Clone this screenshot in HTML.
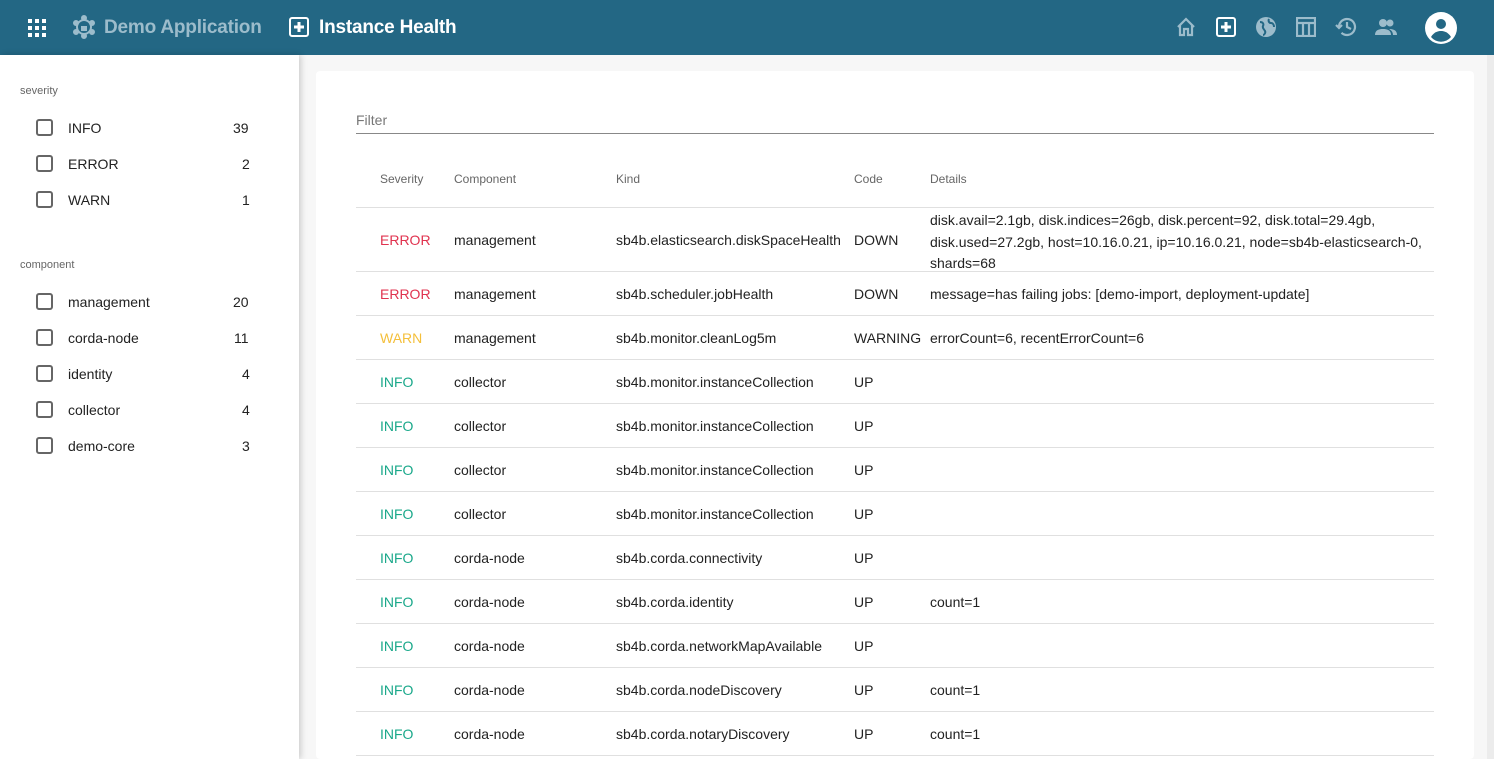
<!DOCTYPE html>
<html><head><meta charset="utf-8"><style>
*{box-sizing:border-box;margin:0;padding:0}
html,body{overflow:hidden}
body{width:1494px;height:759px;overflow:hidden;background:#f7f7f7;font-family:"Liberation Sans",sans-serif;position:relative;color:#222}
.hdr{position:absolute;left:0;top:0;width:1494px;height:55px;background:#236784}
.a{position:absolute;white-space:nowrap}
.side{position:absolute;left:0;top:55px;width:299px;height:704px;background:#fff;box-shadow:2px 0 6px rgba(0,0,0,.18)}
.card{position:absolute;left:316px;top:71px;width:1158px;height:688px;background:#fff;border-radius:4px}
.cb{position:absolute;left:36px;width:17px;height:17px;border:2px solid #666;border-radius:3px}
.st{font-size:14px}
.sh{font-size:12px;color:#666}
.line{position:absolute;left:356px;width:1078px;height:1px;background:#e0e0e0}
.e{color:#e0334f}.w{color:#f4bf3a}.i{color:#1aa88a}
</style></head><body>
<div class="hdr"></div>
<svg class="a" style="left:28px;top:19px" width="18" height="18" viewBox="0 0 18 18" fill="#fff"><rect x="0" y="0" width="4" height="4"/><rect x="7" y="0" width="4" height="4"/><rect x="14" y="0" width="4" height="4"/><rect x="0" y="7" width="4" height="4"/><rect x="7" y="7" width="4" height="4"/><rect x="14" y="7" width="4" height="4"/><rect x="0" y="14" width="4" height="4"/><rect x="7" y="14" width="4" height="4"/><rect x="14" y="14" width="4" height="4"/></svg>
<svg class="a" style="left:73px;top:15px" width="22" height="24" viewBox="0 0 22 24" fill="none" stroke="#9cbccb" stroke-width="2"><circle cx="11" cy="12" r="7"/><circle cx="11" cy="3" r="2" fill="#9cbccb"/><circle cx="3" cy="8" r="2" fill="#9cbccb"/><circle cx="19" cy="8" r="2" fill="#9cbccb"/><circle cx="3" cy="17" r="2" fill="#9cbccb"/><circle cx="19" cy="17" r="2" fill="#9cbccb"/><circle cx="11" cy="21" r="2" fill="#9cbccb"/><rect x="8" y="11" width="6" height="5" fill="#9cbccb" stroke="none"/></svg>
<div class="a" style="left:104px;top:17px;font-size:19px;font-weight:bold;color:#9cbccb;letter-spacing:-0.2px">Demo Application</div>
<svg class="a" style="left:289px;top:17px" width="20" height="20" viewBox="0 0 20 20"><rect x="1" y="1" width="18" height="18" rx="2" fill="none" stroke="#fff" stroke-width="2"/><path d="M10 5v10M5 10h10" stroke="#fff" stroke-width="3"/></svg>
<div class="a" style="left:319px;top:17px;font-size:19px;font-weight:bold;color:#fff;letter-spacing:-0.2px">Instance Health</div>
<svg class="a" style="left:1176px;top:17px" width="20" height="20" viewBox="0 0 20 20" fill="none" stroke="#9cbccb" stroke-width="2.2"><path d="M2 10L10 2l8 8M4 8v10h4v-6h4v6h4V8"/></svg>
<svg class="a" style="left:1216px;top:17px" width="20" height="20" viewBox="0 0 20 20"><rect x="1" y="1" width="18" height="18" rx="2" fill="none" stroke="#fff" stroke-width="2"/><path d="M10 5v10M5 10h10" stroke="#fff" stroke-width="3"/></svg>
<svg class="a" style="left:1256px;top:17px" width="20" height="20" viewBox="0 0 20 20"><circle cx="10" cy="10" r="10" fill="#9cbccb"/><path d="M4 5c3 0 4 2 3 4s1 3 2 5-1 4-2 4M13 2c-1 2 0 4 2 4s3 2 3 4" stroke="#236784" stroke-width="2" fill="none"/></svg>
<svg class="a" style="left:1296px;top:17px" width="20" height="20" viewBox="0 0 20 20" fill="none" stroke="#9cbccb" stroke-width="2.2"><rect x="1" y="1" width="18" height="18"/><path d="M1 6h18M7 6v13M13 6v13"/></svg>
<svg class="a" style="left:1335px;top:16px" width="22" height="22" viewBox="0 0 22 22" fill="none" stroke="#9cbccb" stroke-width="2.2"><path d="M4 11a8 8 0 1 1 2.5 5.8"/><path d="M1 9l3 3 3-3"/><path d="M12 6v5l4 2"/></svg>
<svg class="a" style="left:1375px;top:18px" width="22" height="18" viewBox="0 0 22 18" fill="#9cbccb"><circle cx="8" cy="5" r="4"/><circle cx="15" cy="5" r="3.5"/><path d="M0 17c0-5 4-6 8-6s8 1 8 6zM14 11c4 0 8 1 8 6h-4c0-3-2-5-4-6z"/></svg>
<svg class="a" style="left:1425px;top:12px" width="32" height="32" viewBox="0 0 32 32"><circle cx="16" cy="16" r="16" fill="#fff"/><circle cx="16" cy="12" r="5" fill="#236784"/><path d="M6 25c3-5 7-6 10-6s7 1 10 6a13 13 0 0 1-20 0z" fill="#236784"/></svg>

<div class="side"></div>
<div class="a sh" style="left:20px;top:85px;font-size:11px">severity</div>
<div class="cb" style="top:119px"></div><div class="a st" style="left:68px;top:120px">INFO</div><div class="a st" style="left:233px;top:120px">39</div>
<div class="cb" style="top:155px"></div><div class="a st" style="left:68px;top:156px">ERROR</div><div class="a st" style="left:242px;top:156px">2</div>
<div class="cb" style="top:191px"></div><div class="a st" style="left:68px;top:192px">WARN</div><div class="a st" style="left:242px;top:192px">1</div>
<div class="a sh" style="left:20px;top:259px;font-size:11px">component</div>
<div class="cb" style="top:293px"></div><div class="a st" style="left:68px;top:294px">management</div><div class="a st" style="left:233px;top:294px">20</div>
<div class="cb" style="top:329px"></div><div class="a st" style="left:68px;top:330px">corda-node</div><div class="a st" style="left:234px;top:330px">11</div>
<div class="cb" style="top:365px"></div><div class="a st" style="left:68px;top:366px">identity</div><div class="a st" style="left:242px;top:366px">4</div>
<div class="cb" style="top:401px"></div><div class="a st" style="left:68px;top:402px">collector</div><div class="a st" style="left:242px;top:402px">4</div>
<div class="cb" style="top:437px"></div><div class="a st" style="left:68px;top:438px">demo-core</div><div class="a st" style="left:242px;top:438px">3</div>

<div class="card"></div>
<div class="a" style="left:356px;top:112px;font-size:14px;color:#777">Filter</div>
<div class="a" style="left:356px;top:133px;width:1078px;height:1px;background:#888"></div>
<div class="a sh" style="left:380px;top:172px">Severity</div>
<div class="a sh" style="left:454px;top:172px">Component</div>
<div class="a sh" style="left:616px;top:172px">Kind</div>
<div class="a sh" style="left:854px;top:172px">Code</div>
<div class="a sh" style="left:930px;top:172px">Details</div>
<div class="line" style="top:207px"></div>

<div class="a st e" style="left:380px;top:232px">ERROR</div>
<div class="a st" style="left:454px;top:232px">management</div>
<div class="a st" style="left:616px;top:232px">sb4b.elasticsearch.diskSpaceHealth</div>
<div class="a st" style="left:854px;top:232px">DOWN</div>
<div class="a st" style="left:930px;top:210px;line-height:21.5px">disk.avail=2.1gb, disk.indices=26gb, disk.percent=92, disk.total=29.4gb,<br>disk.used=27.2gb, host=10.16.0.21, ip=10.16.0.21, node=sb4b-elasticsearch-0,<br>shards=68</div>
<div class="line" style="top:271px"></div>

<div class="a st e" style="left:380px;top:286px">ERROR</div><div class="a st" style="left:454px;top:286px">management</div><div class="a st" style="left:616px;top:286px">sb4b.scheduler.jobHealth</div><div class="a st" style="left:854px;top:286px">DOWN</div><div class="a st" style="left:930px;top:286px">message=has failing jobs: [demo-import, deployment-update]</div>
<div class="line" style="top:315px"></div>
<div class="a st w" style="left:380px;top:330px">WARN</div><div class="a st" style="left:454px;top:330px">management</div><div class="a st" style="left:616px;top:330px">sb4b.monitor.cleanLog5m</div><div class="a st" style="left:854px;top:330px">WARNING</div><div class="a st" style="left:930px;top:330px">errorCount=6, recentErrorCount=6</div>
<div class="line" style="top:359px"></div>
<div class="a st i" style="left:380px;top:374px">INFO</div><div class="a st" style="left:454px;top:374px">collector</div><div class="a st" style="left:616px;top:374px">sb4b.monitor.instanceCollection</div><div class="a st" style="left:854px;top:374px">UP</div>
<div class="line" style="top:403px"></div>
<div class="a st i" style="left:380px;top:418px">INFO</div><div class="a st" style="left:454px;top:418px">collector</div><div class="a st" style="left:616px;top:418px">sb4b.monitor.instanceCollection</div><div class="a st" style="left:854px;top:418px">UP</div>
<div class="line" style="top:447px"></div>
<div class="a st i" style="left:380px;top:462px">INFO</div><div class="a st" style="left:454px;top:462px">collector</div><div class="a st" style="left:616px;top:462px">sb4b.monitor.instanceCollection</div><div class="a st" style="left:854px;top:462px">UP</div>
<div class="line" style="top:491px"></div>
<div class="a st i" style="left:380px;top:506px">INFO</div><div class="a st" style="left:454px;top:506px">collector</div><div class="a st" style="left:616px;top:506px">sb4b.monitor.instanceCollection</div><div class="a st" style="left:854px;top:506px">UP</div>
<div class="line" style="top:535px"></div>
<div class="a st i" style="left:380px;top:550px">INFO</div><div class="a st" style="left:454px;top:550px">corda-node</div><div class="a st" style="left:616px;top:550px">sb4b.corda.connectivity</div><div class="a st" style="left:854px;top:550px">UP</div>
<div class="line" style="top:579px"></div>
<div class="a st i" style="left:380px;top:594px">INFO</div><div class="a st" style="left:454px;top:594px">corda-node</div><div class="a st" style="left:616px;top:594px">sb4b.corda.identity</div><div class="a st" style="left:854px;top:594px">UP</div><div class="a st" style="left:930px;top:594px">count=1</div>
<div class="line" style="top:623px"></div>
<div class="a st i" style="left:380px;top:638px">INFO</div><div class="a st" style="left:454px;top:638px">corda-node</div><div class="a st" style="left:616px;top:638px">sb4b.corda.networkMapAvailable</div><div class="a st" style="left:854px;top:638px">UP</div>
<div class="line" style="top:667px"></div>
<div class="a st i" style="left:380px;top:682px">INFO</div><div class="a st" style="left:454px;top:682px">corda-node</div><div class="a st" style="left:616px;top:682px">sb4b.corda.nodeDiscovery</div><div class="a st" style="left:854px;top:682px">UP</div><div class="a st" style="left:930px;top:682px">count=1</div>
<div class="line" style="top:711px"></div>
<div class="a st i" style="left:380px;top:726px">INFO</div><div class="a st" style="left:454px;top:726px">corda-node</div><div class="a st" style="left:616px;top:726px">sb4b.corda.notaryDiscovery</div><div class="a st" style="left:854px;top:726px">UP</div><div class="a st" style="left:930px;top:726px">count=1</div>
<div class="line" style="top:755px"></div>
<div class="a" style="left:1487px;top:55px;width:7px;height:704px;background:#ececec"></div>
</body></html>
